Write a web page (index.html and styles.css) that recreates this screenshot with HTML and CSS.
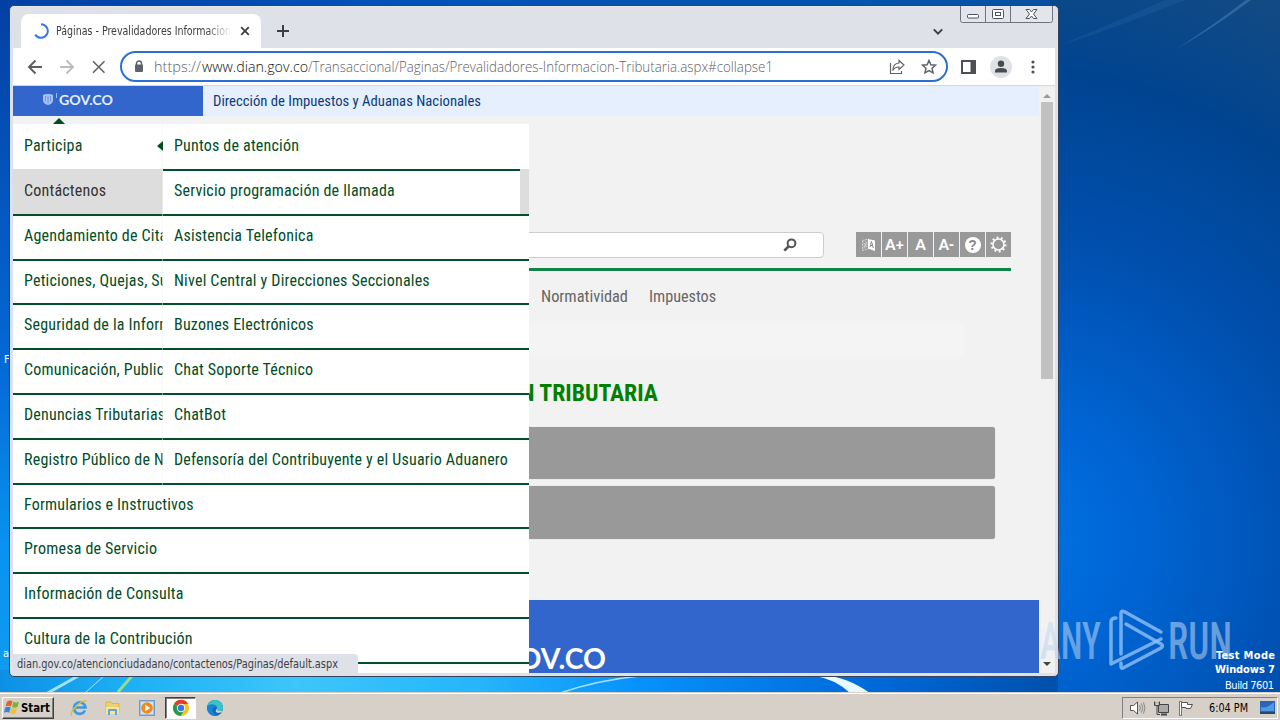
FILE: index.html
```html
<!DOCTYPE html>
<html lang="es">
<head>
<meta charset="utf-8">
<title>Páginas - Prevalidadores Informacion Tributaria</title>
<link rel="stylesheet" href="styles.css">
</head>
<body>
<div class="desktop">
  <svg class="wallpaper" width="1280" height="720" viewBox="0 0 1280 720">
    <defs>
      <linearGradient id="left" x1="0" y1="0" x2="0" y2="1"><stop offset="0" stop-color="#0340a4"/><stop offset=".5" stop-color="#0568d4"/><stop offset=".75" stop-color="#0891ef"/><stop offset="1" stop-color="#139ff0"/></linearGradient>
      <linearGradient id="top" x1="0" y1="0" x2="1" y2="0"><stop offset="0" stop-color="#0340a4"/><stop offset=".3" stop-color="#0052b8"/><stop offset=".7" stop-color="#0554ac"/><stop offset="1" stop-color="#0e4a8c"/></linearGradient>
      <radialGradient id="right" gradientUnits="userSpaceOnUse" cx="1010" cy="540" r="590"><stop offset="0" stop-color="#0074e4"/><stop offset=".2" stop-color="#0066d6"/><stop offset=".52" stop-color="#004fae"/><stop offset=".8" stop-color="#004490"/><stop offset="1" stop-color="#124a84"/></radialGradient>
      <linearGradient id="bottom" x1="0" y1="0" x2="1" y2="0"><stop offset="0" stop-color="#0c90e6"/><stop offset=".12" stop-color="#1cb0f4"/><stop offset=".28" stop-color="#3cc6fb"/><stop offset=".45" stop-color="#25b6fb"/><stop offset=".6" stop-color="#0892fc"/><stop offset=".83" stop-color="#0068d8"/><stop offset="1" stop-color="#0050ac"/></linearGradient>
    </defs>
    <rect width="1280" height="720" fill="url(#top)"/>
    <rect width="14" height="720" fill="url(#left)"/>
    <rect x="1050" width="230" height="720" fill="url(#right)"/>
    <path d="M0 670h1058v50H0z" fill="url(#bottom)"/>
    <path d="M1175 50Q1215 24 1246 0h5Q1215 27 1175 50Z" fill="#5d93c8" opacity=".4"/>
    <path d="M1060 45Q1110 24 1165 0h20Q1100 34 1060 45Z" fill="#2a6db0" opacity=".25"/>
    <g fill="none" stroke="#c6f4ff" opacity=".8"><path d="M46 694 78 676" stroke-width="3"/><path d="M86 692 104 676" stroke-width="1"/><path d="M560 693Q598 680 640 676" stroke-width="1.5"/></g>
    <path d="M118 692 132 676" stroke="#8de08c" stroke-width="3"/>
    <path d="M815 676Q835 679 850 693h20Q845 676 825 676Z" fill="#e8f9ff"/>
  </svg>
  <span class="icon-label l1">F</span><span class="icon-label l2">a</span>

  <main class="window">
    <header class="tabstrip">
      <div class="tab">
        <svg width="16" height="16" viewBox="0 0 16 16"><path d="M8 1.200a6.800 6.800 0 1 1-5.800 10.400" fill="none" stroke="#3c78dc" stroke-width="2"/></svg>
        <svg class="tab-title" width="176" height="18"><text x="0" y="13" textLength="175" lengthAdjust="spacingAndGlyphs">Páginas - Prevalidadores Informacion</text></svg>
        <svg width="10" height="10" viewBox="0 0 10 10"><path d="m1.200 1.200 7.600 7.600m0-7.600-7.600 7.600" stroke="#3c4043" stroke-width="1.800"/></svg>
      </div>
      <svg class="plus" width="12" height="12" viewBox="0 0 12 12"><path d="M6 0v12M0 6h12" stroke="#3c4043" stroke-width="2"/></svg>
      <svg class="chev" width="10" height="8" viewBox="0 0 10 8"><path d="m.8 1.400 4.200 4.200 4.200-4.200" fill="none" stroke="#3c4043" stroke-width="2"/></svg>
      <svg class="controls" width="94" height="18" viewBox="0 0 94 18"><path d="M.5 0v14.500q0 2 2 2h88q2 0 2-2V0M25.500 0v16M50.500 0v16" fill="#e2e5ec" stroke="#6f747e"/><g fill="#fff" stroke="#4c525c"><rect x="7.500" y="8.500" width="11" height="3.500" rx="1"/><rect x="32.500" y="3.500" width="11" height="9" rx="1"/><rect x="35.500" y="6.500" width="5" height="3"/><path d="M66 3.500h3.500l2 2.500 2-2.500H77L73.500 8l3.500 4.500h-3.500l-2-2.500-2 2.500H66L69.500 8Z"/></g></svg>
    </header>
    <nav class="toolbar">
      <svg class="navs" width="80" height="16" viewBox="0 0 80 16" fill="none" stroke-width="1.900"><path d="M15 8H2m6.500-6.500L2 8l6.500 6.500" stroke="#5b5e62"/><path d="M33 8h13m-6.500-6.500L46 8l-6.500 6.500" stroke="#b9bbbe"/><path d="m66 2.200 11.500 11.500m0-11.500L66 13.700" stroke="#5f6368" stroke-width="1.600"/></svg>
      <div class="omnibox">
        <svg width="10" height="13" viewBox="0 0 10 13"><path d="M2.500 5V3.500a2.500 2.500 0 0 1 5 0V5" fill="none" stroke="#5f6368" stroke-width="1.500"/><rect x="1" y="4.500" width="8" height="7.500" rx="1" fill="#5f6368"/></svg>
        <svg class="url" width="624" height="24"><text x="0" y="17" textLength="47" lengthAdjust="spacingAndGlyphs">https://</text><text class="host" x="48" y="17" textLength="106" lengthAdjust="spacingAndGlyphs">www.dian.gov.co</text><text x="154" y="17" textLength="465" lengthAdjust="spacingAndGlyphs">/Transaccional/Paginas/Prevalidadores-Informacion-Tributaria.aspx#collapse1</text></svg>
        <svg class="share" width="16" height="16" viewBox="0 0 16 16" fill="none" stroke="#5f6368" stroke-width="1.200"><path d="M1.500 4v10.500h11V12M10 1.500 15 6l-5 4.500V8Q5.500 8 3.800 11.500 4 4.500 10 4Z"/></svg>
        <svg width="16" height="16" viewBox="0 0 16 16"><path d="m8 1.500 1.900 4.200 4.600.5-3.400 3.100.9 4.600-4-2.300-4 2.300.9-4.600L1.500 6.200l4.600-.5Z" fill="none" stroke="#5f6368" stroke-width="1.500"/></svg>
      </div>
      <svg class="panel-ic" width="15" height="14" viewBox="0 0 15 14"><path d="M1 1h13v12H1z" fill="none" stroke="#4d5054" stroke-width="2"/><path d="M9.500 0H15v14H9.500z" fill="#4d5054"/></svg>
      <svg class="avatar" width="22" height="22" viewBox="0 0 22 22"><circle cx="11" cy="11" r="11" fill="#dee1e6"/><circle cx="11" cy="7.800" r="3.200" fill="#474b52"/><path d="M5 16.500v-1.600q0-3 6-3t6 3v1.600Z" fill="#474b52"/></svg>
      <svg class="dots" width="4" height="14" viewBox="0 0 4 14" fill="#4d5054"><circle cx="2" cy="2" r="1.600"/><circle cx="2" cy="7" r="1.600"/><circle cx="2" cy="12" r="1.600"/></svg>
    </nav>

    <div class="viewport">
      <section class="page">
        <header class="govbar">
          <div class="gov-logo"><svg width="17" height="13" viewBox="0 0 17 13"><path d="M1 2Q3 1 6 1t5 1v5q0 4-5 5Q1 11 1 7Z" fill="#a8c4f4"/><path d="M3.500 3v5.500m2.500-6v8M8.500 3v5.500" stroke="#5a87da" stroke-width=".8"/><path d="M14.500 0v5" stroke="#9cbcf2"/></svg><svg width="56" height="16"><text x="0" y="11.500" textLength="54" lengthAdjust="spacingAndGlyphs">GOV.CO</text></svg></div>
          <div class="entity"><svg width="272" height="22"><text x="0" y="14.500" textLength="268" lengthAdjust="spacingAndGlyphs">Dirección de Impuestos y Aduanas Nacionales</text></svg></div>
        </header>
        <div class="search-row">
          <div class="search"><svg width="14" height="14" viewBox="0 0 14 14"><circle cx="8.500" cy="5.300" r="3.900" fill="none" stroke="#555" stroke-width="2"/><path d="m6 8-4.700 4.700" stroke="#555" stroke-width="2.600"/></svg></div>
          <div class="tools">
            <span><svg width="15" height="15" viewBox="0 0 15 15"><path d="M1.500 3.500 7.500 2v10l-6 1.500Z" fill="#a4a4a4" stroke="#d4d4d4" stroke-dasharray="2 1"/><path d="m3 6 3 4m0-5-3 6" stroke="#ddd" stroke-width=".8"/><path d="m7 2 7 1.500v10.500L7 11.500Z" fill="#fff"/><path d="m9 10 1.500-5.500L12.300 11M9.500 8.500h2" fill="none" stroke="#888"/></svg></span>
            <span>A+</span><span>A</span><span>A-</span>
            <span><b class="q">?</b></span>
            <span><svg width="17" height="17" viewBox="0 0 17 17" fill="none" stroke="#fff"><circle cx="8.500" cy="8.500" r="5.500" stroke-width="1.500"/><circle cx="8.500" cy="8.500" r="7" stroke-width="2" stroke-dasharray="1.900 2.500"/></svg></span>
          </div>
        </div>
        <div class="mainnav"><svg width="180" height="24"><text x="0" y="17" textLength="87" lengthAdjust="spacingAndGlyphs">Normatividad</text><text x="108" y="17" textLength="67" lengthAdjust="spacingAndGlyphs">Impuestos</text></svg></div>
        <div class="crumb"></div>
        <h1><svg width="142" height="32"><text x="0" y="24" textLength="138" lengthAdjust="spacingAndGlyphs">N TRIBUTARIA</text></svg></h1>
        <div class="acc a1"></div><div class="acc a2"></div>
        <footer><svg width="130" height="38"><text x="0" y="33" textLength="108" lengthAdjust="spacingAndGlyphs">GOV.CO</text></svg></footer>

        <i class="caret-up"></i>
        <div class="menu">
          <ul class="items">
            <li>Participa</li><li class="active">Contáctenos</li><li><span>Agendamiento de Cita</span></li><li><span>Peticiones, Quejas, Su</span></li><li><span>Seguridad de la Inform</span></li><li><span>Comunicación, Public</span></li><li><span>Denuncias Tributarias</span></li><li><span>Registro Público de N</span></li><li>Formularios e Instructivos</li><li>Promesa de Servicio</li><li>Información de Consulta</li><li>Cultura de la Contribución</li>
          </ul>
          <ul class="submenu">
            <li>Puntos de atención</li><li>Servicio programación de llamada</li><li>Asistencia Telefonica</li><li>Nivel Central y Direcciones Seccionales</li><li>Buzones Electrónicos</li><li>Chat Soporte Técnico</li><li>ChatBot</li><li>Defensoría del Contribuyente y el Usuario Aduanero</li>
          </ul>
          <i class="caret-left"></i>
        </div>
      </section>
      <aside class="scrollbar"><i class="up"></i><div class="thumb"></div><i class="down"></i></aside>
      <div class="status"><svg width="330" height="18"><text x="0" y="13" textLength="321" lengthAdjust="spacingAndGlyphs">dian.gov.co/atencionciudadano/contactenos/Paginas/default.aspx</text></svg></div>
    </div>
  </main>

  <svg class="watermark" width="200" height="66" viewBox="0 0 200 66">
    <defs><linearGradient id="wm" x1="0" y1="0" x2="0" y2="1"><stop offset="0" stop-color="#c4dcf8" stop-opacity=".55"/><stop offset="1" stop-color="#b4cdec" stop-opacity=".55"/></linearGradient></defs>
    <g fill="url(#wm)" class="wm-text"><text x="1" y="51" textLength="61" lengthAdjust="spacingAndGlyphs">ANY</text><text x="129" y="51" textLength="64" lengthAdjust="spacingAndGlyphs">RUN</text></g>
    <g fill="none" stroke="#8fc1f4" stroke-opacity=".8" stroke-width="3.500" stroke-linejoin="round" stroke-linecap="round"><path d="M77 10q-5 0-5 4v42l10-5 40-20"/><path d="M82 46V5q0-3 4-1l36 20M87 16l35 20q3 2 0 4L84 60q-2 1-2-2v-3"/></g>
  </svg>
  <svg class="build" width="80" height="48"><g text-anchor="end"><text class="b" x="77" y="13" textLength="59">Test Mode</text><text class="b" x="77" y="27" textLength="60">Windows 7</text><text x="76" y="43" textLength="49">Build 7601</text></g></svg>

  <footer class="taskbar">
    <div class="start"><svg width="17" height="15" viewBox="0 0 17 15"><path d="M3 1.500q3-2 5.500-.3L7 6.500q-2.500-1.500-5.500 0Z" fill="#e2622a"/><path d="M9.300 1.800q3 1.500 5.700 0l-1.500 5.300q-3 1.200-5.500 0Z" fill="#77b53c"/><path d="M1.200 7.600q3-1.500 5.500 0L5.300 12.800q-2.500-1.500-5.300 0Z" fill="#3b82d8"/><path d="M7.600 8.100q2.700 1.400 5.500 0l-1.500 5.300q-3 1.300-5.400 0Z" fill="#f3c02f"/></svg><svg width="31" height="15"><text x="0" y="11.500" textLength="29" lengthAdjust="spacingAndGlyphs">Start</text></svg></div>
    <div class="apps">
      <span><svg width="18" height="18" viewBox="0 0 18 18"><path d="M15 11.500a5.800 5.800 0 1 1 .5-3H5" fill="none" stroke="#3b9be0" stroke-width="2.600"/><path d="M1.500 16.500Q0 14 5 8.500 13 0 16.500 2" fill="none" stroke="#e4bb37" stroke-width="1.500"/></svg></span>
      <span><svg width="18" height="18" viewBox="0 0 18 18"><path d="M2 3h5l1 1.500h7V14H2Z" fill="#efd16d" stroke="#c9a540" stroke-width=".6"/><path d="M2 8h13v7H2Z" fill="#f8e59b"/><path d="M4 16v-5q0-1 1-1h7q1 0 1 1v5h-2v-4H6v4Z" fill="#5ba7d6"/></svg></span>
      <span><svg width="18" height="18" viewBox="0 0 18 18"><rect x="1.500" y="1.500" width="15" height="15" fill="#9cc3e6" stroke="#6f9cc8"/><path d="M3 3h12v12H3z" fill="#d2e6f7"/><circle cx="9" cy="9" r="5.800" fill="#f08a1c"/><path d="m7.200 5.800 5 3.200-5 3.200Z" fill="#fff"/></svg></span>
      <span class="on"><svg width="18" height="18" viewBox="0 0 18 18"><circle cx="9" cy="9" r="8" fill="#fbc116"/><path d="M9 9 2 5A8 8 0 0 1 16 5H9Z" fill="#e33b2e"/><path d="M9 9 2 5A8 8 0 0 0 8.500 17L12.500 11Z" fill="#229b4c"/><circle cx="9" cy="9" r="4.200" fill="#fff"/><circle cx="9" cy="9" r="3.200" fill="#3877e2"/></svg></span>
      <span><svg width="18" height="18" viewBox="0 0 18 18"><circle cx="9" cy="9" r="8" fill="#0f6cbd"/><path d="M1.100 8A8 8 0 0 1 17 8q.5 4-4 4-3 0-2-2 .5-4-4-4-4 0-5.900 2Z" fill="#36c5c3"/><path d="M1.100 8Q2 5 6.500 5.200 11 6 11 9.500 9 7 7 9t1 5.500 5 1A8 8 0 0 1 1.100 8Z" fill="#1784d8"/><path d="M11 9.500q-1 3.500 6 2-2 2.500-5 2.500-4-1-1-4.500Z" fill="#d6d0c8"/></svg></span>
    </div>
    <div class="tray">
      <svg width="17" height="16" viewBox="0 0 17 16" stroke="#555"><path d="M1.500 5.500h3L8.500 2v12L4.500 10.500h-3Z" fill="#fff"/><path d="M10.500 5q1.500 3 0 6M12.500 3.500q2.500 4.500 0 9M14.500 2.500q3 5.500 0 11" fill="none" stroke="#888"/></svg>
      <svg width="17" height="16" viewBox="0 0 17 16"><path d="M5.500 4.500h10v8h-10z" fill="#aaa" stroke="#444"/><path d="M8 14.500h6" stroke="#444" stroke-width="2"/><path d="M1.500 1.500v4h5v-4M4 5.500v9h3" fill="none" stroke="#444"/><path d="M2 3h4v2H2z" fill="#fff" stroke="#555" stroke-width=".6"/></svg>
      <svg width="17" height="16" viewBox="0 0 17 16"><path d="M2.500 15.500v-14h2v14Z" fill="#fff" stroke="#555" stroke-width=".8"/><path d="M4.500 2.500h6v2h5l-2 4H9v-1H4.500Z" fill="#fff" stroke="#555"/></svg>
      <svg class="clock" width="42" height="16"><text x="0" y="11.500" textLength="39" lengthAdjust="spacingAndGlyphs">6:04 PM</text></svg>
      <svg class="desk" width="15" height="13" viewBox="0 0 15 13"><path d="M0 0h15v11H0z" fill="#2b63bd"/><path d="M1 6Q7 8 14 1v9H1Z" fill="#4f9ae4"/><path d="M0 11h15v2H0z" fill="#26486f"/></svg>
    </div>
  </footer>
</div>
</body>
</html>
```
FILE: styles.css
```css
* { box-sizing: border-box; }
body { margin: 0; overflow: hidden; font-family: "Roboto Condensed", Roboto, sans-serif; }
svg { display: block; flex: none; }
svg text { white-space: pre; }
ul { list-style: none; margin: 0; padding: 0; }
.desktop { position: relative; width: 1280px; height: 720px; overflow: hidden; display: flex; flex-direction: column; justify-content: flex-end; }
.wallpaper { position: absolute; inset: 0; }
.icon-label { position: absolute; color: #fff; font: 11px "DejaVu Sans Condensed", "DejaVu Sans", sans-serif; }
.l1 { left: 4px; top: 353px; }
.l2 { left: 3px; top: 647px; }

.window { position: absolute; left: 9px; top: 5px; width: 1050px; height: 672px; border: 1px solid #34435c; border-radius: 5px; background: #dee1e8; padding: 0 3px 3px; display: flex; flex-direction: column; overflow: hidden; }
.tabstrip { height: 42px; display: flex; align-items: flex-start; border-top: 1px solid #e9e4e5; flex: none; }
.tab { width: 240px; height: 34px; margin: 7px 0 0 8px; background: #fff; border-radius: 8px 8px 0 0; display: flex; align-items: center; padding-left: 12px; gap: 7px; }
.tab svg:last-child { margin-left: 1px; }
.tab-title { font: 11.5px "DejaVu Sans Condensed", "DejaVu Sans", sans-serif; fill: #3c4043; mask-image: linear-gradient(90deg, #000 150px, transparent 176px); }
.plus { margin: 18px 0 0 16px; }
.chev { margin: 21px 0 0 auto; }
.controls { margin: -1px 1px 0 17px; }
.toolbar { height: 37px; background: #fff; display: flex; align-items: center; padding-left: 14px; width: 1042px; flex: none; }
.omnibox { margin-left: 13px; width: 828px; height: 31px; border: 2px solid #2a6fd2; border-radius: 16px; display: flex; align-items: center; padding-left: 12px; }
.url { margin-left: 10px; font: 300 14px "Open Sans", sans-serif; fill: #5f6368; }
.host { fill: #111; }
.share { margin: 0 16px 0 111px; }
.panel-ic { margin-left: 13px; }
.avatar { margin-left: 14px; }
.dots { margin-left: 19px; }

.viewport { position: relative; flex: 1; display: flex; border-top: 1px solid #d4d6da; }
.page { position: relative; width: 1026px; background: #f2f2f2; overflow: hidden; }
.scrollbar { width: 16px; background: #f1f1f1; padding-right: 1px; display: flex; flex-direction: column; align-items: center; }
.thumb { width: 12px; height: 277px; background: #c1c1c1; }
.up { border: 4px solid transparent; border-top: 0; border-bottom-color: #9a9a9a; margin: 8px 0 4px; }
.down { border: 4px solid transparent; border-bottom: 0; border-top-color: #444; margin-top: auto; margin-bottom: 7px; }

.govbar { height: 30px; display: flex; }
.gov-logo { width: 190px; background: #36c; display: flex; padding: 7px 0 0 29px; font: 700 14px Lato, sans-serif; fill: #e6eefc; }
.entity { flex: 1; background: #e6effd; padding: 5px 0 0 10px; font-size: 15px; fill: #0d3c78; }
.search-row { margin-top: 116px; width: 998px; height: 39px; border-bottom: 3px solid #118449; display: flex; }
.search { width: 611px; height: 26px; margin-left: 200px; background: #fff; border: 1px solid #ccc; border-radius: 4px; display: flex; align-items: center; justify-content: flex-end; padding-right: 26px; }
.tools { margin-left: 32px; display: flex; gap: 1px; }
.tools span { width: 25px; height: 25px; background: #999; color: #fff; display: flex; align-items: center; justify-content: center; font: 900 14.5px Lato, sans-serif; }
.tools .q { width: 16px; height: 16px; border-radius: 50%; background: #fff; color: #888; font: bold 14px/16px "Liberation Sans", sans-serif; text-align: center; }
.mainnav { padding: 14px 0 0 528px; height: 52px; font-size: 16px; fill: #666; }
.crumb { width: 952px; height: 34px; background: #f4f4f4; }
h1 { margin: 20px 0 0 507px; height: 50px; font-size: 24px; fill: green; }
.acc { width: 982px; background: #999; border-radius: 3px; box-shadow: 0 0 1px #aaa; }
.a1 { height: 52px; }
.a2 { height: 53px; margin-top: 7px; }
footer { fill: #fff; }
.page > footer { margin-top: 61px; height: 73px; background: #36c; padding: 36px 0 0 485px; font: 700 28px Lato, sans-serif; }

.caret-up { position: absolute; left: 40px; top: 32px; border: 6px solid transparent; border-top: 0; border-bottom-color: #00501f; }
.menu { position: absolute; left: 0; top: 38px; width: 516px; bottom: 0; background: #fff; padding-top: 2.2px; font-size: 16px; color: #004d26; letter-spacing: .2px; }
.menu li { height: 44.8px; border-bottom: 2px solid #00502c; padding: 9px 0 0 11px; line-height: 22px; white-space: nowrap; }
.items span { display: block; width: 139px; overflow: hidden; }
.items li:first-child { border-bottom-color: #fff; }
.items .active { color: #333; background: #ddd; box-shadow: 0 -2px #ddd; }
.submenu { position: absolute; left: 150px; top: 0; width: 357px; padding-top: 2.2px; background: #fff; box-shadow: -.5px 0 #f1f4f2; }
.caret-left { position: absolute; left: 144px; top: 17px; border: 5px solid transparent; border-left: 0; border-right: 6px solid #00501f; }
.status { position: absolute; left: 0; bottom: 0; width: 345px; height: 19px; background: #dee1e8; border-radius: 0 4px 0 0; padding: 1px 0 0 4px; font: 11.5px "DejaVu Sans Condensed", "DejaVu Sans", sans-serif; fill: #3c4043; }

.watermark { position: absolute; left: 1039px; top: 608px; }
.wm-text { font-size: 52px; font-weight: 500; }
.build { position: absolute; left: 1198px; top: 646px; font: 11px "DejaVu Sans Condensed", "DejaVu Sans", sans-serif; fill: #fff; }
.b { font-weight: bold; }

.taskbar { position: relative; height: 28px; background: #d6d0c8; border-top: 1px solid #d6d0c8; box-shadow: inset 0 1px #fff; display: flex; align-items: center; padding: 3px 2px 1px; }
.start { width: 52px; height: 22px; border: 1px solid; border-color: #fff #404040 #404040 #fff; box-shadow: inset -1px -1px #808080; display: flex; align-items: center; gap: 0; padding-left: 1px; font: bold 12px "DejaVu Sans Condensed", "DejaVu Sans", sans-serif; fill: #000; }
.apps { display: flex; margin-left: 9px; gap: 3px; }
.apps span { width: 31px; height: 22px; display: flex; align-items: center; justify-content: center; }
.apps .on { background: #fff; border: 1px solid; border-color: #404040 #fff #fff #404040; box-shadow: inset 1px 1px #808080; }
.tray { margin-left: auto; width: 156px; height: 22px; border: 1px solid; border-color: #808080 #fff #fff #808080; display: flex; align-items: center; padding-left: 6px; gap: 7px; font: 11.5px "DejaVu Sans Condensed", "DejaVu Sans", sans-serif; fill: #000; }
.clock { margin-left: 8px; }
.desk { margin-left: 2px; }
```
